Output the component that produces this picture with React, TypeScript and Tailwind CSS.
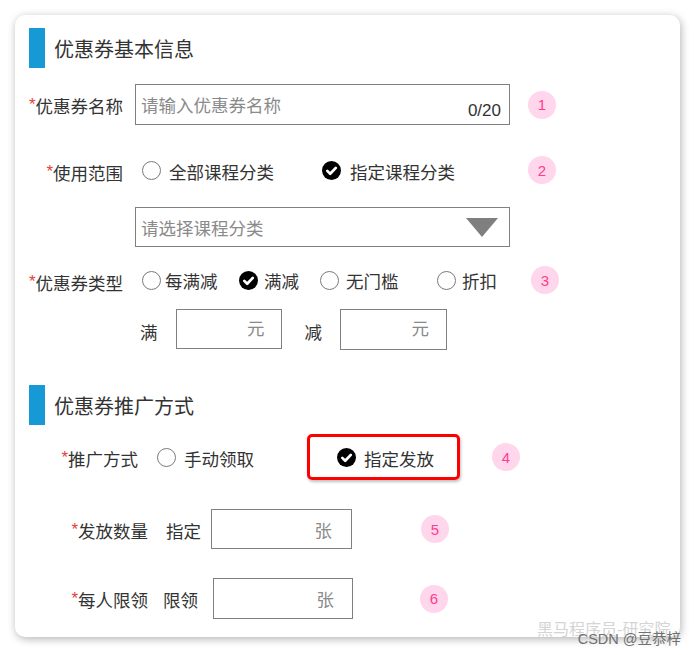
import React from 'react';

const FONT = { fontFamily: '"Noto Sans CJK SC", "Liberation Sans", sans-serif' };

function Star() {
  return <span className="text-[#e0433b] font-['Liberation_Sans'] text-[17px] leading-none self-start mt-[2px]">*</span>;
}

function Radio() {
  return <span className="block w-[19px] h-[19px] shrink-0 rounded-full border border-[#7a7a7a] bg-white" />;
}

function Checked() {
  return (
    <svg width="19" height="19" viewBox="0 0 19 19" className="shrink-0">
      <circle cx="9.5" cy="9.5" r="9.5" fill="#000" />
      <path d="M5.3 9.9 L8.2 12.7 L13.8 6.9" fill="none" stroke="#fff" strokeWidth="2.7" strokeLinecap="round" strokeLinejoin="round" />
    </svg>
  );
}

function Badge({ n, className = '' }: { n: number; className?: string }) {
  return (
    <span className={`flex items-center justify-center w-[28px] h-[28px] shrink-0 rounded-full bg-[#ffd6eb] text-[#ff3d8b] font-['Liberation_Sans'] text-[15px] ${className}`}>
      {n}
    </span>
  );
}

function Heading({ text, className = '' }: { text: string; className?: string }) {
  return (
    <div className={`flex items-center h-[40px] ${className}`}>
      <span className="block w-[16px] h-[40px] bg-[#1799d6]" />
      <span className="ml-[9px] text-[20px] leading-none text-[#333] mt-[2px]">{text}</span>
    </div>
  );
}

function Label({ text, className = '' }: { text: string; className?: string }) {
  return (
    <span className={`flex items-center justify-end whitespace-nowrap shrink-0 ${className}`}>
      <Star />
      <span className="mt-[3px]">{text}</span>
    </span>
  );
}

export default function App() {
  return (
    <div className="relative w-[695px] h-[655px] bg-white pt-[15px] pl-[15px] overflow-hidden" style={FONT}>
      <div className="w-[665px] h-[622px] bg-white rounded-[10px] shadow-[1px_2px_8px_rgba(0,0,0,0.3)] px-[14px] pt-[13px] text-[17.5px] leading-none text-[#333]">
        <Heading text="优惠券基本信息" />

        {/* 名称 */}
        <div className="flex items-center h-[41px] mt-[16px]">
          <Label text="优惠券名称" className="w-[106px] pr-[12px]" />
          <div className="flex justify-between w-[375px] h-[41px] border border-[#808080] pl-[5px] pr-[8px]">
            <span className="self-center mt-[1px] text-[#8a8a8a]">请输入优惠券名称</span>
            <span className="self-end mb-[5px] font-['Liberation_Sans'] text-[17px] text-[#333]">0/20</span>
          </div>
          <Badge n={1} className="ml-[18px]" />
        </div>

        {/* 使用范围 */}
        <div className="flex items-center h-[28px] mt-[31px]">
          <Label text="使用范围" className="w-[106px] pr-[12px] mt-[3px]" />
          <div className="flex items-center gap-[8px] w-[180px] ml-[7px]">
            <Radio />
            <span className="mt-[4px]">全部课程分类</span>
          </div>
          <div className="flex items-center gap-[9px] w-[206px]">
            <Checked />
            <span className="mt-[4px]">指定课程分类</span>
          </div>
          <Badge n={2} />
        </div>

        {/* 课程分类 select */}
        <div className="flex items-center justify-between ml-[106px] mt-[23px] w-[375px] h-[40px] border border-[#808080] pl-[5px] pr-[11px]">
          <span className="mt-[1px] text-[#8a8a8a]">请选择课程分类</span>
          <svg width="32" height="19" viewBox="0 0 32 19">
            <polygon points="0,0 32,0 16,19" fill="#7f7f7f" />
          </svg>
        </div>

        {/* 优惠券类型 */}
        <div className="flex items-center h-[28px] mt-[19px]">
          <Label text="优惠券类型" className="w-[106px] pr-[12px] mt-[3px]" />
          <div className="flex items-center gap-[4px] w-[97px] ml-[7px]">
            <Radio />
            <span className="mt-[2px]">每满减</span>
          </div>
          <div className="flex items-center gap-[6px] w-[81px]">
            <Checked />
            <span className="mt-[2px]">满减</span>
          </div>
          <div className="flex items-center gap-[7px] w-[117px]">
            <Radio />
            <span className="mt-[2px]">无门槛</span>
          </div>
          <div className="flex items-center gap-[6px] w-[94px]">
            <Radio />
            <span className="mt-[2px]">折扣</span>
          </div>
          <Badge n={3} />
        </div>

        {/* 满 减 */}
        <div className="flex items-center h-[40px] mt-[15px]">
          <span className="ml-[111px] mt-[6px]">满</span>
          <div className="flex items-center justify-end ml-[18px] w-[106px] h-[40px] border border-[#808080] pr-[16px]">
            <span className="text-[#8a8a8a] mb-[3px]">元</span>
          </div>
          <span className="ml-[23px] mt-[6px]">减</span>
          <div className="flex items-center justify-end ml-[18px] w-[107px] h-[41px] border border-[#808080] pr-[17px]">
            <span className="text-[#8a8a8a] mb-[3px]">元</span>
          </div>
        </div>

        <Heading text="优惠券推广方式" className="mt-[36px]" />

        {/* 推广方式 */}
        <div className="flex items-center h-[46px] mt-[9px]">
          <Label text="推广方式" className="ml-[31px] w-[78px]" />
          <div className="flex items-center gap-[8px] w-[150px] ml-[19px]">
            <Radio />
            <span className="mt-[4px]">手动领取</span>
          </div>
          <div className="flex items-center gap-[8px] w-[153px] h-[46px] border-[3px] border-[#ff0000] rounded-[5px] pl-[27px] shadow-[1px_2px_3px_rgba(0,0,0,0.25)]">
            <Checked />
            <span className="mt-[3px]">指定发放</span>
          </div>
          <Badge n={4} className="ml-[32px]" />
        </div>

        {/* 发放数量 */}
        <div className="flex items-center h-[40px] mt-[29px]">
          <Label text="发放数量" className="ml-[43px] w-[76px]" />
          <span className="ml-[18px] mt-[3px] whitespace-nowrap">指定</span>
          <div className="flex items-center justify-end ml-[10px] w-[141px] h-[40px] border border-[#808080] pr-[19px]">
            <span className="text-[#8a8a8a] mt-[1px]">张</span>
          </div>
          <Badge n={5} className="ml-[69px]" />
        </div>

        {/* 每人限领 */}
        <div className="flex items-center h-[41px] mt-[29px]">
          <Label text="每人限领" className="ml-[43px] w-[76px]" />
          <span className="ml-[15px] mt-[3px] whitespace-nowrap">限领</span>
          <div className="flex items-center justify-end ml-[15px] w-[140px] h-[41px] border border-[#808080] pr-[18px]">
            <span className="text-[#8a8a8a] mt-[1px]">张</span>
          </div>
          <Badge n={6} className="ml-[67px]" />
        </div>
      </div>

      {/* watermark */}
      <div className="absolute left-[537px] top-[620px] text-[16px] leading-none text-[#d4d4d4] whitespace-nowrap">黑马程序员-研究院</div>
      <div className="absolute right-[14px] top-[631px] text-[14.5px] leading-none text-[#707070] whitespace-nowrap">
        <span className="font-['Liberation_Sans']">CSDN @</span>豆恭梓
      </div>
    </div>
  );
}
